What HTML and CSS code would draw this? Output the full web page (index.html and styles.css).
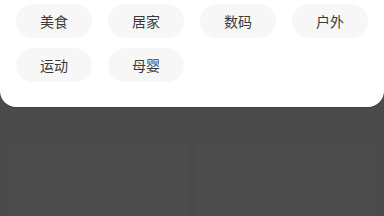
FILE: index.html
```html
<!DOCTYPE html>
<html lang="zh">
<head>
<meta charset="utf-8">
<link rel="stylesheet" href="styles.css">
</head>
<body>
<div class="page">
  <div class="behind">
    <div class="card"></div>
    <div class="card"></div>
  </div>
  <div class="sheet">
    <div class="grid">
      <div class="chip">美食</div>
      <div class="chip">居家</div>
      <div class="chip">数码</div>
      <div class="chip">户外</div>
      <div class="chip">运动</div>
      <div class="chip">母婴</div>
    </div>
  </div>
</div>
</body>
</html>
```
FILE: styles.css
```css
html, body {
  margin: 0;
  padding: 0;
  width: 384px;
  height: 216px;
  overflow: hidden;
  background: #4a4a4a;
  font-family: "Noto Sans CJK SC", "Noto Sans", sans-serif;
}
.page {
  position: relative;
  width: 384px;
  height: 216px;
  background: #4a4a4a;
}
.behind {
  display: flex;
  gap: 7px;
  padding: 145px 8px 0 8px;
}
.card {
  flex: 1;
  height: 80px;
  background: #4c4c4c;
}
.sheet {
  position: absolute;
  top: 0;
  left: 0;
  width: 384px;
  height: 107px;
  box-sizing: border-box;
  background: #ffffff;
  border-radius: 0 0 16px 16px;
  padding: 4px 16px 0 16px;
  box-shadow: 0 1px 1px rgba(0,0,0,0.15);
}
.grid {
  display: grid;
  grid-template-columns: repeat(4, 1fr);
  column-gap: 16px;
  row-gap: 10px;
}
.chip {
  height: 34px;
  border-radius: 17px;
  background: #f7f7f7;
  color: #3a3a3a;
  font-size: 14px;
  display: flex;
  align-items: center;
  justify-content: center;
}
```
